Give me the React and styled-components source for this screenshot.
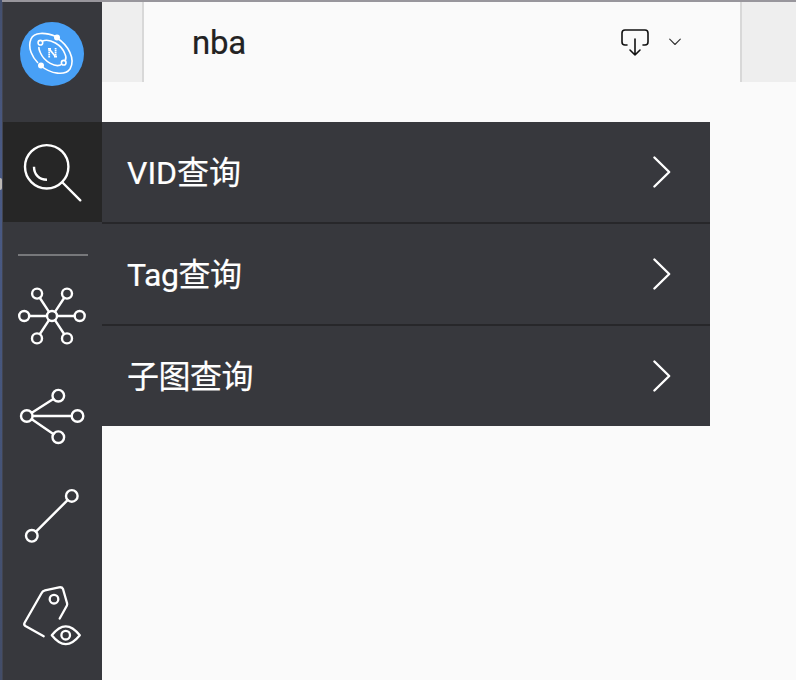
import React from "react";
import styled, { createGlobalStyle } from "styled-components";

const GlobalStyle = createGlobalStyle`
  * { box-sizing: border-box; }
  body { margin: 0; overflow: hidden; background: #fafafa; }
  svg { display: block; }
`;

const Screen = styled.div`
  width: 796px;
  height: 680px;
  display: grid;
  grid-template-columns: 2px 100px 1fr;
  grid-template-rows: 2px 678px;
  background: #fafafa;
  font-family: Roboto, "Noto Sans CJK SC", sans-serif;
`;

const DesktopEdge = styled.div`
  grid-row: 1 / 3;
  display: flex;
  align-items: center;
  background: linear-gradient(#44506f, #4a5a85 25%, #46567c 60%, #434d68);
`;

const EdgeMark = styled.span`
  width: 2px;
  height: 12px;
  margin-top: -312px;
  border-radius: 0 2px 2px 0;
  background: #bcb9b5;
`;

const WindowEdge = styled.div`
  grid-column: 2 / 4;
  background: #98969c;
`;

const Rail = styled.nav`
  display: flex;
  flex-direction: column;
  background: #37383d;
  border-left: 1px solid #424551;
`;

const LogoArea = styled.div`
  height: 120px;
  padding: 20px 0 0 17px;
`;

const RailButton = styled.button`
  width: 99px;
  height: 100px;
  flex: none;
  padding: 0;
  border: 0;
  color: #fff;
  background: ${({ $active }) => ($active ? "#262626" : "transparent")};

  svg {
    width: 100px;
    height: 100px;
    margin-left: -1px;
  }
`;

const RailDivider = styled.hr`
  width: 70px;
  height: 2px;
  margin: 32px 0 10px 15px;
  border: 0;
  background: #77787b;
  flex: none;
`;

const Main = styled.main`
  display: flex;
  flex-direction: column;
  align-items: flex-start;
`;

const TabBar = styled.div`
  display: flex;
  width: 100%;
  height: 80px;
  margin-bottom: 40px;
  background: #eeeeee;
`;

const Tab = styled.div`
  width: 600px;
  margin-left: 40px;
  padding: 0 59px 0 48px;
  display: flex;
  align-items: center;
  background: #fafafa;
  border: solid #d8d8d8;
  border-width: 0 2px;
`;

const TabTitle = styled.span`
  flex: 1;
  padding-top: 2px;
  font-size: 33px;
  line-height: 80px;
  letter-spacing: -0.2px;
  color: #222;
  -webkit-text-stroke: 0.2px #222;
`;

const Menu = styled.ul`
  width: 608px;
  margin: 0;
  padding: 0;
  list-style: none;
  background: #37383d;
`;

const MenuItem = styled.li`
  height: 100px;
  display: flex;
  align-items: center;
  justify-content: space-between;
  padding: 0 38px 0 25px;
  color: #fff;

  & + & {
    height: 102px;
    border-top: 2px solid #27272a;
  }
`;

const MenuLabel = styled.span`
  padding-top: 2px;
  font-size: 32px;
  line-height: 46px;
  letter-spacing: ${({ $tracking }) => $tracking};
  -webkit-text-stroke: 0.2px #fff;
`;

const Stroke = ({ children, width = 2.4, ...props }) => (
  <svg fill="none" stroke="currentColor" strokeWidth={width} strokeLinecap="round" strokeLinejoin="round" {...props}>
    {children}
  </svg>
);

const Logo = () => (
  <svg width="64" height="64" viewBox="0 0 64 64" fill="none" stroke="#fff" strokeWidth="1.6">
    <circle cx="32" cy="32" r="32" fill="#48a0f6" stroke="none" />
    <path d="M36 14.5C25 10 14 10 11 17C7 26 13 36 18 41M21 44C31 52 45 54 50 47C56 37 48 23 37 16" />
    <path d="M22.5 19C30 16 42 23 45 32C46.5 35 46 37 45.2 38.5M42 42C36 47 24 39 20.5 31C19 28 18.7 26 19 25" />
    <circle cx="37" cy="15.5" r="3" fill="#fff" stroke="none" />
    <circle cx="21" cy="43.5" r="3" fill="#fff" stroke="none" />
    <circle cx="20.4" cy="20.7" r="2.3" />
    <circle cx="43.7" cy="40.7" r="2.3" />
    <path strokeWidth="1.8" strokeDasharray="1.6 .4" d="M29.2 26V35.5M35.6 26V35.5M28 26.8H31M34 34.7H37" />
    <path strokeWidth="1.7" d="M29.5 27.3L35 34" />
  </svg>
);

const SearchIcon = () => (
  <Stroke viewBox="0 0 100 100">
    <circle cx="44.7" cy="44.8" r="21.7" />
    <path strokeLinecap="butt" d="M32 44.8C32 52.5 37 57.7 45 57.7" />
    <path d="M60.5 60.5L78.3 78.3" />
  </Stroke>
);

const HubIcon = () => (
  <Stroke viewBox="0 0 100 100">
    {[[50, 50], [22.2, 50], [77.7, 50], [35.1, 27.6], [65, 27.6], [35, 72.4], [65, 72.4]].map(([x, y]) => (
      <circle key={`${x}-${y}`} cx={x} cy={y} r={5} />
    ))}
    <path d="M27.3 50H44.9M55.1 50H72.6M37.9 32L47 45.8M62.1 32L53 45.8M37.9 68L47 54.2M62.1 68L53 54.2" />
  </Stroke>
);

const ExpandIcon = () => (
  <Stroke viewBox="0 0 100 100">
    {[[24.8, 50], [56.3, 29.7], [75.5, 50], [56.3, 71.2]].map(([x, y]) => (
      <circle key={`${x}-${y}`} cx={x} cy={y} r="5.8" />
    ))}
    <path d="M30.7 50H69.6M29.8 46.8L51.3 32.9M29.8 53.2L51.3 68" />
  </Stroke>
);

const PathIcon = () => (
  <Stroke viewBox="0 0 100 100">
    <circle cx="29.8" cy="69.8" r="5.8" />
    <circle cx="69.8" cy="29.9" r="5.8" />
    <path d="M34 65.6L65.6 34.1" />
  </Stroke>
);

const TagIcon = () => (
  <Stroke width={2.3} viewBox="0 0 100 100">
    <path d="M41.7 70.2L23.4 60Q21.5 58.7 22.6 56.7L39.5 27.3Q40.5 25 43 24.4L57 21.4Q60 20.8 61 23L65 37Q65.5 38.4 64.8 39.7L57.7 52.5" />
    <circle cx="52" cy="33.2" r="4.3" />
    <path d="M49.8 69.3Q63.7 51.3 77.8 69.3Q63.7 87 49.8 69.3Z" />
    <circle cx="63.7" cy="69.2" r="4.3" />
  </Stroke>
);

const ExportIcon = styled(Stroke)`
  width: 28px;
  height: 28px;
  margin: 1px 20px 0 0;
  color: #111;
`;

const TabChevron = styled(Stroke)`
  width: 12px;
  height: 8px;
  color: #333;
`;

const MenuChevron = styled(Stroke)`
  width: 20px;
  height: 34px;
`;

const queries = [
  { label: "VID查询", tracking: "0" },
  { label: "Tag查询", tracking: "-0.4px" },
  { label: "子图查询", tracking: "-0.5px" },
];

export default function App() {
  return (
    <Screen>
      <GlobalStyle />
      <DesktopEdge><EdgeMark /></DesktopEdge>
      <WindowEdge />
      <Rail>
        <LogoArea><Logo /></LogoArea>
        <RailButton $active><SearchIcon /></RailButton>
        <RailDivider />
        <RailButton><HubIcon /></RailButton>
        <RailButton><ExpandIcon /></RailButton>
        <RailButton><PathIcon /></RailButton>
        <RailButton><TagIcon /></RailButton>
      </Rail>
      <Main>
        <TabBar>
          <Tab>
            <TabTitle>nba</TabTitle>
            <ExportIcon width={1.6} viewBox="0 0 28 28">
              <path d="M6 16H4Q1 16 1 13V4Q1 1 4 1H24Q27 1 27 4V13Q27 16 24 16H22M14 10V26M9 21L14 26L19 21" />
            </ExportIcon>
            <TabChevron width={1.1} viewBox="0 0 12 8">
              <path d="M.7 1.2L6 6.5L11.3 1.2" />
            </TabChevron>
          </Tab>
        </TabBar>
        <Menu>
          {queries.map(({ label, tracking }) => (
            <MenuItem key={label}>
              <MenuLabel $tracking={tracking}>{label}</MenuLabel>
              <MenuChevron viewBox="0 0 20 34">
                <path d="M2.4 2.5L17.2 17L2.4 31.5" />
              </MenuChevron>
            </MenuItem>
          ))}
        </Menu>
      </Main>
    </Screen>
  );
}
